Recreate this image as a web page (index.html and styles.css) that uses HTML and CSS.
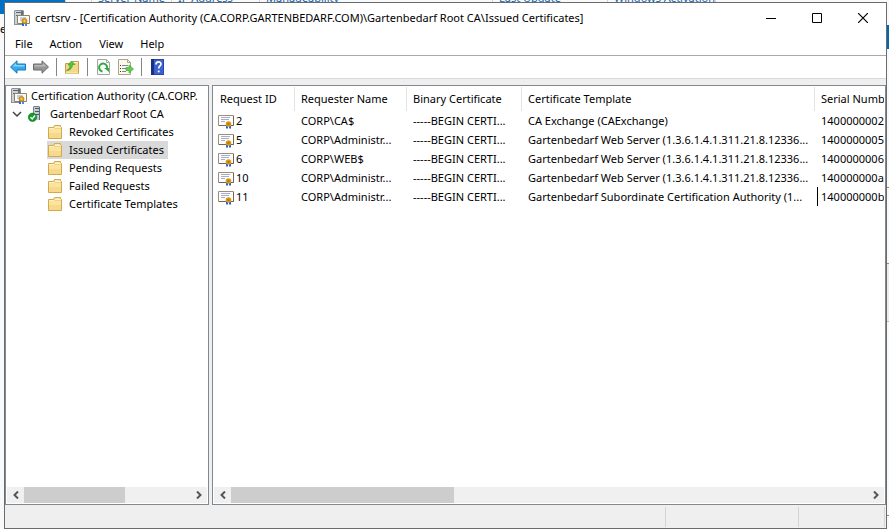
FILE: index.html
```html
<!DOCTYPE html>
<html lang="en">
<head>
<meta charset="utf-8">
<title>certsrv</title>
<link rel="stylesheet" href="styles.css">
</head>
<body>
<svg class="defs" aria-hidden="true">
  <symbol id="authority" viewBox="0 0 16 16">
    <path d="M1 0h8l1 1v14H0V1z" fill="#87929a"/><path d="M1 1h6v13H1z" fill="#cbd2d6"/><path d="M2 2h5v1H2zM2 5h5v1H2z" fill="#59666e"/><path d="M7 1h2v4H7z" fill="#66737b"/>
    <path d="M3.500 5.500h12v8h-12z" fill="#fbfaf5" stroke="#958063"/><path d="M6 8h6M6 10h4" stroke="#8fa6cf"/>
    <path d="M8 12h2v4H8z" fill="#2c69d8"/><path d="M11 12h2v4h-2z" fill="#4a86e8"/>
    <circle cx="10.500" cy="11" r="2.600" fill="#e0a01c" stroke="#b27808" stroke-width=".6"/><circle cx="10.500" cy="11" r="1" fill="#f5cf62"/>
  </symbol>
  <symbol id="server" viewBox="0 0 16 16">
    <path d="M6 0h5l1 1v13H5V1z" fill="#76828a"/><path d="M6 1h5v13H6z" fill="#c4ccd0"/><path d="M7 2h4v1H7zM7 5h4v1H7zM7 8h4v1H7z" fill="#4d5961"/><path d="M11 1h1v13h-1z" fill="#5c6970"/>
    <circle cx="4.500" cy="11.300" r="4.200" fill="#16992b" stroke="#0c7a1c" stroke-width=".6"/><path d="m2.500 11.300 1.700 1.700 2.800-3.500" fill="none" stroke="#fff" stroke-width="1.500"/>
  </symbol>
  <symbol id="folder" viewBox="0 0 16 16">
    <path d="M1.500 3.500h5l1-2h6v2h1v11h-13z" fill="#f3d27c" stroke="#d3a94c"/><path d="M8 2.500h5v1H8z" fill="#fff"/><path d="M2 5h12v9H2z" fill="#fbe3a0"/><path d="M2 9h12v5H2z" fill="#f7d98b"/><path d="M2 4.500h5l1-1h6" fill="none" stroke="#fff1c4"/>
  </symbol>
  <symbol id="cert" viewBox="0 0 16 16">
    <path d="M.5 1.500h15v10H.5z" fill="#fcfcfa" stroke="#a08d78"/><path d="M15.500 2v9.500H1" fill="none" stroke="#76634e"/><path d="M3 3.500h9M3 5.500h8M3 7.500h4" stroke="#a3add0"/>
    <path d="M8 11h2v4l-1-1-1 1zM11 11h2v4l-1-1-1 1z" fill="#2463dc"/><circle cx="10.500" cy="10" r="2.800" fill="#d99c18"/><circle cx="10.500" cy="10" r="1.200" fill="#b67907"/>
  </symbol>
  <symbol id="chev-left" viewBox="0 0 8 8"><path d="M6 .5 2.500 4 6 7.500" fill="none" stroke="#555" stroke-width="2"/></symbol>
  <symbol id="chev-right" viewBox="0 0 8 8"><path d="M2 .5 5.500 4 2 7.500" fill="none" stroke="#555" stroke-width="2"/></symbol>
</svg>

<div class="behind" aria-hidden="true">
  <span class="tile"></span><span class="gap"></span>
  <span class="col name">Server Name</span><span class="col ip">IP Address</span><span class="col manage">Manageability</span><span class="col update">Last Update</span><span class="col">Windows Activation</span>
</div>
<div class="behind-left" aria-hidden="true">e</div>

<div class="window">
  <header class="titlebar">
    <svg class="icon"><use href="#authority"/></svg>
    <h1>certsrv - [Certification Authority (CA.CORP.GARTENBEDARF.COM)\Gartenbedarf Root CA\Issued Certificates]</h1>
    <div class="caption">
      <button aria-label="Minimize"><svg viewBox="0 0 10 10"><path d="M0 5.500h10" stroke="#000"/></svg></button>
      <button aria-label="Maximize"><svg viewBox="0 0 10 10"><path d="M.5.5h9v9h-9z" fill="none" stroke="#000"/></svg></button>
      <button aria-label="Close"><svg viewBox="0 0 10 10"><path d="m0 0 10 10M10 0 0 10" stroke="#000" stroke-width="1.200"/></svg></button>
    </div>
  </header>
  <nav class="menubar"><button>File</button><button>Action</button><button>View</button><button>Help</button></nav>
  <div class="toolbar">
    <button aria-label="Back"><svg viewBox="0 0 16 16"><path d="M.5 8 7 1.800V5h8.500v6H7v3.200z" fill="#35aaea" stroke="#1878bd"/><path d="M2.500 7.500 6 4v2h8.500v1.500z" fill="#8ad5fa"/></svg></button>
    <button aria-label="Forward"><svg viewBox="0 0 16 16"><path d="M15.500 8 9 1.800V5H.5v6H9v3.200z" fill="#969696" stroke="#6b6b6b"/><path d="M13.500 7.500 10 4v2H1.500v1.500z" fill="#b9b9b9"/></svg></button>
    <span class="rule"></span>
    <button aria-label="Up one level"><svg viewBox="0 0 16 16"><path d="M1.500 4.500h6l1-2h6v12h-13z" fill="#f5d788" stroke="#c99f4c"/><path d="M9 3.500h5M2 14h12" stroke="#fff0bd"/><path d="M2.500 11.500c2.500-1 3.500-3 3.500-5.500H4L7.500 2 11 5.500H8.500c0 3-2 6-6 6z" fill="#4fc83c" stroke="#2c9627" stroke-width=".6"/></svg></button>
    <span class="rule"></span>
    <button aria-label="Refresh"><svg viewBox="0 0 16 16"><path d="M2.500.5h9l3 3v12h-12z" fill="#fbfbfb" stroke="#a5a5a5"/><path d="M11.500.5v3h3" fill="none" stroke="#a5a5a5"/><path d="M7.500 12.500a4 4 0 1 1 4.500-3" fill="none" stroke="#31a93d" stroke-width="2"/><path d="M9 9h5v4z" fill="#31a93d"/></svg></button>
    <button aria-label="Export List"><svg viewBox="0 0 16 16"><path d="M.5.5h9l3 3v12H.5z" fill="#fdf9e8" stroke="#a9a394"/><path d="M9.500.5v3h3" fill="none" stroke="#a9a394"/><path d="M2 6.500h1M2 9.500h1M2 12.500h1" stroke="#333"/><path d="M4 6.500h6M4 9.500h4M4 12.500h4" stroke="#8181a5"/><path d="M8 8.500h3V6l4.500 4-4.500 4v-2.500H8z" fill="#5dcf47" stroke="#38a52e" stroke-width=".6"/></svg></button>
    <span class="rule"></span>
    <button aria-label="Help"><svg viewBox="0 0 16 16"><path d="M2 0h13v16H2z" fill="#2448b0"/><path d="M2 0h3v16H2z" fill="#173083"/><path d="M5 1h9v14H5z" fill="#3b62cd"/><path d="M7 5.500c0-3.300 5-3.300 5-.5 0 2-2.300 2-2.300 4.500" fill="none" stroke="#fff" stroke-width="1.700"/><path d="M8.800 11.500h1.800v1.800H8.800z" fill="#fff"/></svg></button>
  </div>

  <main class="panes">
    <section class="pane tree-pane">
      <ul class="tree">
        <li class="root"><svg class="icon"><use href="#authority"/></svg><span>Certification Authority (CA.CORP.</span></li>
        <li class="ca"><svg class="twisty" viewBox="0 0 10 10"><path d="m1 3 4 4 4-4" fill="none" stroke="#444" stroke-width="1.500"/></svg><svg class="icon"><use href="#server"/></svg>Gartenbedarf Root CA</li>
        <li class="leaf"><svg class="icon"><use href="#folder"/></svg><span>Revoked Certificates</span></li>
        <li class="leaf selected"><svg class="icon"><use href="#folder"/></svg><span>Issued Certificates</span></li>
        <li class="leaf"><svg class="icon"><use href="#folder"/></svg><span>Pending Requests</span></li>
        <li class="leaf"><svg class="icon"><use href="#folder"/></svg><span>Failed Requests</span></li>
        <li class="leaf"><svg class="icon"><use href="#folder"/></svg><span>Certificate Templates</span></li>
      </ul>
      <div class="scrollbar"><button aria-label="Scroll left"><svg><use href="#chev-left"/></svg></button><div class="track"><div class="thumb tree-thumb"></div></div><button aria-label="Scroll right"><svg><use href="#chev-right"/></svg></button></div>
    </section>
    <section class="pane list-pane">
      <div class="list">
        <table>
          <colgroup><col class="c-id"><col class="c-name"><col class="c-binary"><col class="c-template"><col></colgroup>
          <thead><tr><th>Request ID</th><th>Requester Name</th><th>Binary Certificate</th><th>Certificate Template</th><th>Serial Number</th></tr></thead>
          <tbody>
            <tr><td><svg class="icon"><use href="#cert"/></svg>2</td><td>CORP\CA$</td><td>-----BEGIN CERTI...</td><td>CA Exchange (CAExchange)</td><td>14000000020</td></tr>
            <tr><td><svg class="icon"><use href="#cert"/></svg>5</td><td>CORP\Administr...</td><td>-----BEGIN CERTI...</td><td>Gartenbedarf Web Server (1.3.6.1.4.1.311.21.8.12336...</td><td>1400000005e</td></tr>
            <tr><td><svg class="icon"><use href="#cert"/></svg>6</td><td>CORP\WEB$</td><td>-----BEGIN CERTI...</td><td>Gartenbedarf Web Server (1.3.6.1.4.1.311.21.8.12336...</td><td>14000000068</td></tr>
            <tr><td><svg class="icon"><use href="#cert"/></svg>10</td><td>CORP\Administr...</td><td>-----BEGIN CERTI...</td><td>Gartenbedarf Web Server (1.3.6.1.4.1.311.21.8.12336...</td><td>140000000a3</td></tr>
            <tr><td><svg class="icon"><use href="#cert"/></svg>11</td><td>CORP\Administr...</td><td>-----BEGIN CERTI...</td><td>Gartenbedarf Subordinate Certification Authority (1...</td><td class="caret">140000000b5</td></tr>
          </tbody>
        </table>
      </div>
      <div class="scrollbar"><button aria-label="Scroll left"><svg><use href="#chev-left"/></svg></button><div class="track"><div class="thumb list-thumb"></div></div><button aria-label="Scroll right"><svg><use href="#chev-right"/></svg></button></div>
    </section>
  </main>
  <footer class="status"><span class="message"></span><span class="part wide"></span><span class="part"></span></footer>
</div>
</body>
</html>
```
FILE: styles.css
```css
* { box-sizing: border-box; }

body {
  margin: 0;
  height: 100vh;
  padding: 2px 2px 0 4px;
  font: 11px/18px "Noto Sans", "Open Sans", sans-serif;
  color: #000;
  background:
    linear-gradient(#0067b3, #0067b3) right 25px / 2px 24px no-repeat,
    linear-gradient(#8a8a8a, #8a8a8a) right 187px / 2px 1px no-repeat,
    linear-gradient(#8a8a8a, #8a8a8a) right 263px / 2px 1px no-repeat,
    linear-gradient(#ededed, #ededed) right 264px / 2px 57px no-repeat,
    linear-gradient(#c0c0c0, #c0c0c0) right 321px / 2px 1px no-repeat,
    linear-gradient(#8a8a8a, #8a8a8a) right 515px / 2px 1px no-repeat,
    linear-gradient(#0072c6, #0072c6) left top / 4px 14px no-repeat,
    #f7f9fb;
}

button {
  padding: 0;
  border: 0;
  background: none;
  font: inherit;
  color: inherit;
}

.defs { position: absolute; width: 0; height: 0; }
.icon { flex: none; width: 16px; height: 16px; }

/* Slivers of the application behind the window */
.behind {
  position: absolute;
  inset: 0 0 auto 0;
  display: flex;
  align-items: flex-end;
  height: 2px;
  overflow: hidden;
  line-height: 8px;
  color: #1565a8;
}
.behind span { flex: none; height: 8px; }
.tile { width: 65px; background: #0072c6; }
.gap { width: 27px; border-left: 1px solid #d5d5d5; border-right: 1px solid #d5d5d5; }
.col { padding-left: 6px; border-right: 1px solid #d5d5d5; }
.name { width: 80px; }
.ip { width: 88px; }
.manage { width: 233px; }
.update { width: 115px; }
.behind-left {
  position: absolute;
  top: 20px;
  left: 0;
  width: 4px;
  overflow: hidden;
}

.window {
  position: relative;
  display: flex;
  flex-direction: column;
  height: 100%;
  border: 1px solid #6b6b6b;
  background: #fff;
}

.titlebar { display: flex; align-items: center; height: 29px; padding-left: 9px; }
.titlebar h1 {
  flex: 1;
  margin: 0 0 0 5px;
  overflow: hidden;
  white-space: nowrap;
  font-size: 11px;
  font-weight: 400;
}
.caption { display: flex; }
.caption button { display: grid; place-items: center; width: 46px; height: 28px; }
.caption svg { width: 10px; height: 10px; }

.menubar { display: flex; gap: 17px; height: 24px; padding: 0 10px; border-bottom: 1px solid #a9a9ad; }

.toolbar {
  display: flex;
  align-items: center;
  gap: 7px;
  height: 23px;
  padding-left: 5px;
  border-bottom: 1px solid #d9d9d9;
}
.toolbar button, .toolbar svg { display: block; width: 16px; height: 16px; }
.rule { width: 1px; height: 18px; background: #858585; }

.panes {
  flex: 1;
  display: grid;
  grid-template-columns: 204px minmax(0, 1fr);
  gap: 3px;
  min-height: 0;
  padding-top: 6px;
  background: #efefef;
}
.pane {
  display: flex;
  flex-direction: column;
  min-width: 0;
  padding: 1px;
  border: 1px solid #828790;
  background: #fff;
}

.tree { flex: 1; margin: 0; padding: 0; overflow: hidden; list-style: none; white-space: nowrap; }
.tree li { display: flex; align-items: center; height: 18px; }
.root { gap: 4px; padding-left: 4px; }
.root span { overflow: hidden; }
.ca { gap: 6px; padding-left: 5px; }
.twisty { width: 10px; height: 10px; }
.leaf { padding-left: 40px; }
.leaf span { padding: 0 4px 0 6px; }
.selected .icon, .selected span { background: #d9d9d9; }
.selected .icon { height: 18px; }

.list { flex: 1; overflow: hidden; }
table { width: 100%; table-layout: fixed; border-collapse: separate; border-spacing: 0; white-space: nowrap; }
.c-id { width: 81px; }
.c-name { width: 112px; }
.c-binary { width: 115px; }
.c-template { width: 293px; }
th, td { padding: 0 0 0 6px; overflow: hidden; text-align: left; font-weight: 400; }
th { height: 24px; border-right: 1px solid #e3e3e3; }
th:last-child { border-right: 0; }
td { height: 19px; line-height: 19px; }
td .icon { margin: 0 2px 0 -2px; vertical-align: middle; }
.caret { position: relative; }
.caret::before { content: ""; position: absolute; inset: 0 auto 0 2px; border-left: 1px solid #000; }

.scrollbar { display: flex; height: 16px; background: #f0f0f0; }
.scrollbar button { display: grid; place-items: center; width: 17px; }
.scrollbar svg { width: 8px; height: 8px; }
.track { flex: 1; }
.thumb { height: 100%; background: #cdcdcd; }
.tree-thumb { width: 61%; }
.list-thumb { width: 35%; }

.status { display: flex; height: 23px; padding: 2px 1px 1px 0; background: #efefef; }
.message { flex: 1; border-right: 1px solid #d5d5d5; }
.part { width: 86px; border-right: 1px solid #d5d5d5; }
.wide { width: 133px; }
```
